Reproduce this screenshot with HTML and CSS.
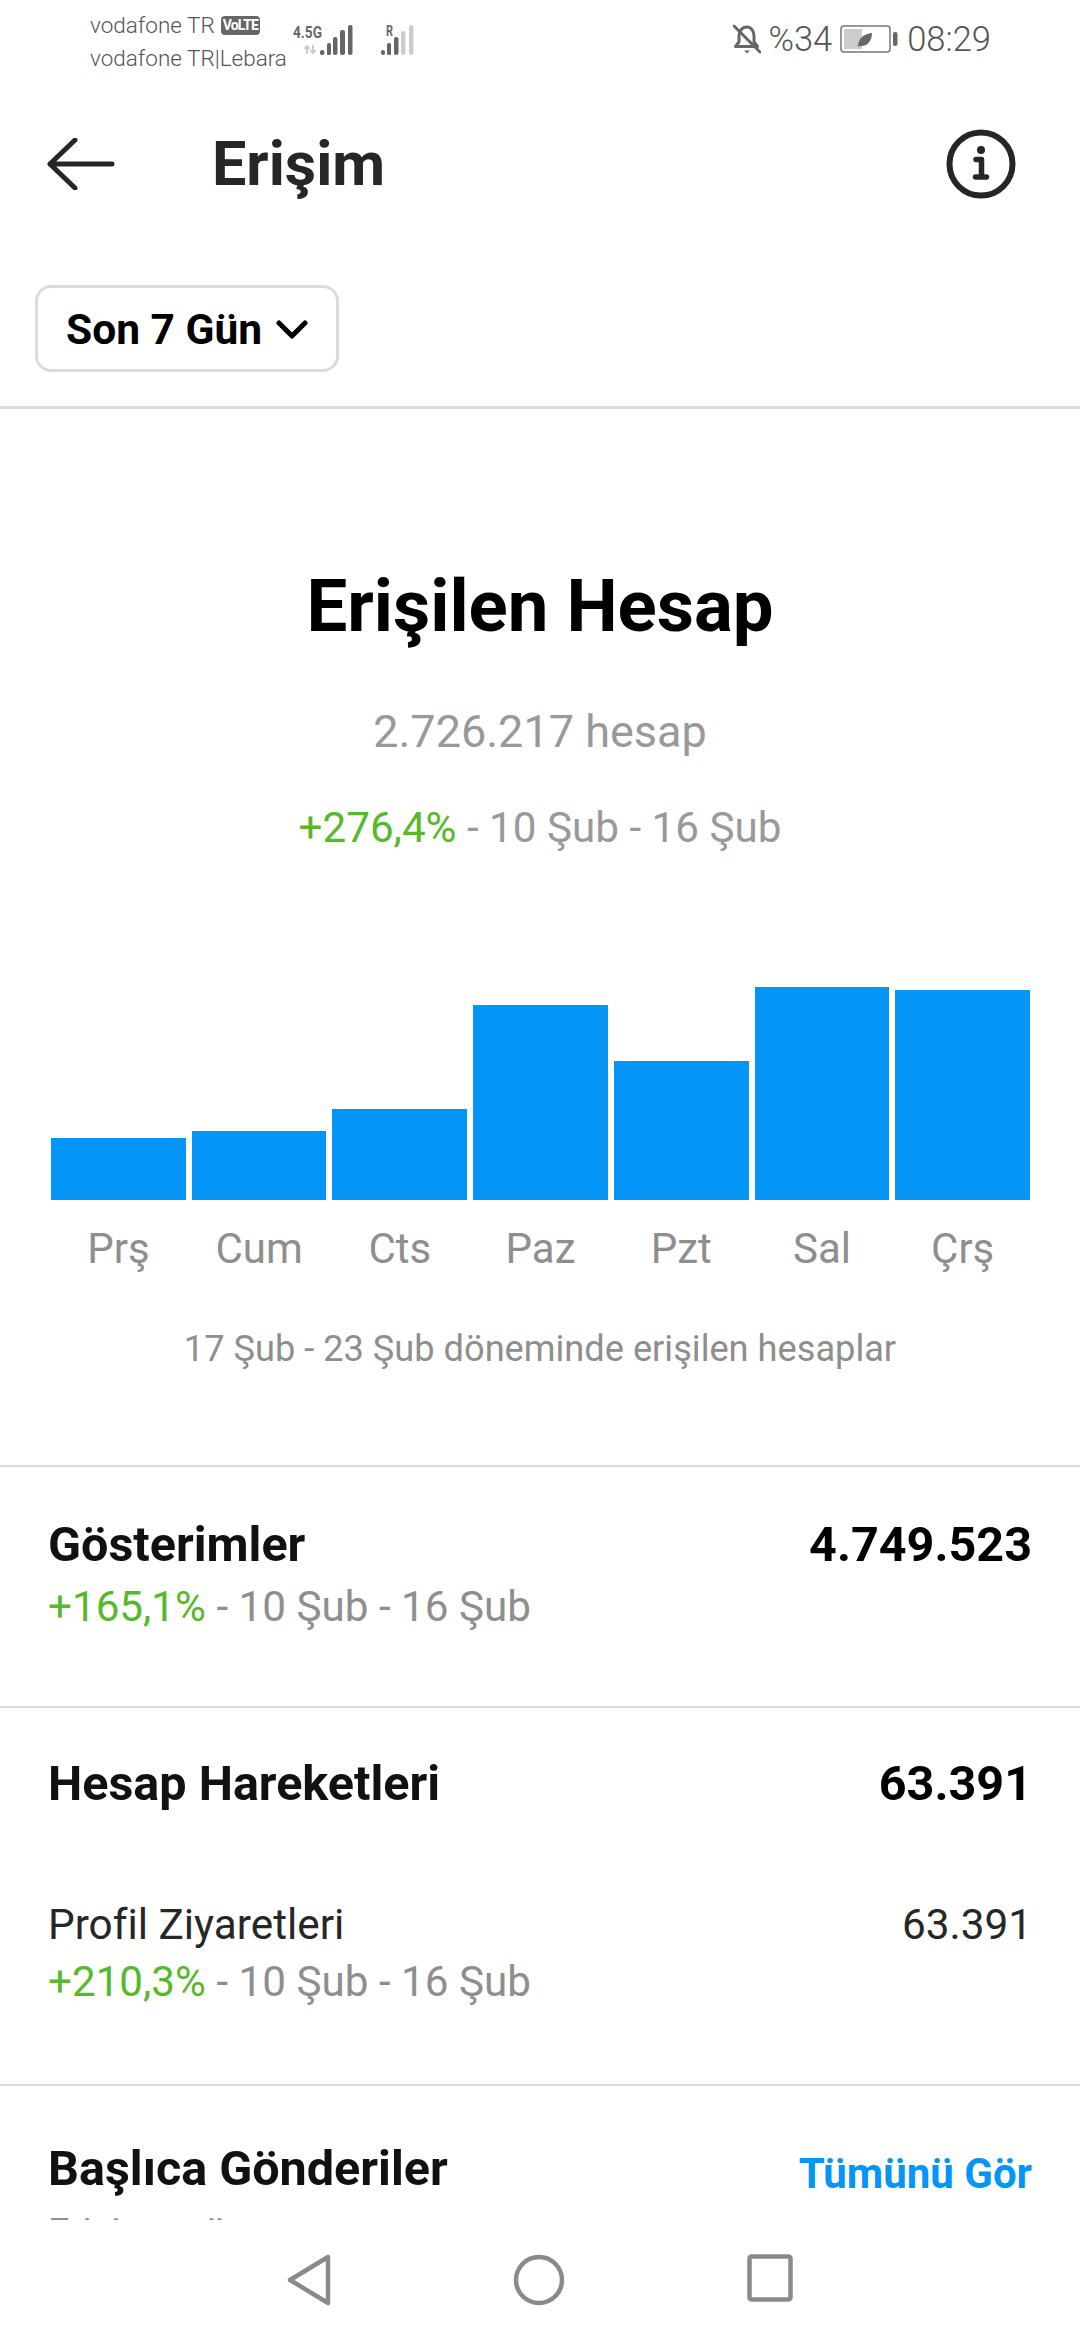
FILE: index.html
```html
<!DOCTYPE html>
<html lang="tr">
<head>
<meta charset="utf-8">
<title>Erişim</title>
<link rel="stylesheet" href="styles.css">
</head>
<body>
<div class="page">
  <div class="status">
    <div class="carriers">
      <div class="carrier">vodafone TR <span class="volte">VoLTE</span></div>
      <div class="carrier">vodafone TR|Lebara</div>
    </div>
    <svg class="sig1" width="64" height="40" viewBox="0 0 64 40">
      <text x="2" y="18" class="sigtext" textLength="29" lengthAdjust="spacingAndGlyphs">4.5G</text>
      <path d="M16 26v8M13.500 29l2.500-3 2.500 3M22 25v8M19.500 30l2.500 3 2.500-3" fill="none" stroke="#ccc" stroke-width="2"/>
      <g fill="#666">
        <rect x="29" y="30" width="4.400" height="5" rx="2"/><rect x="36" y="23" width="4" height="12" rx="1.500"/><rect x="42" y="17" width="4.500" height="18" rx="2"/><rect x="49" y="10" width="5" height="25" rx="2"/><rect x="57" y="5" width="4.500" height="30" rx="2"/>
      </g>
    </svg>
    <svg class="sig2" width="40" height="40" viewBox="0 0 40 40">
      <text x="8" y="16" class="sigtext sm" textLength="7" lengthAdjust="spacingAndGlyphs">R</text>
      <g fill="#666"><rect x="3" y="30" width="4" height="5" rx="2"/><rect x="9" y="23" width="4" height="12" rx="1.500"/><rect x="16" y="17" width="4.500" height="18" rx="2"/></g>
      <g fill="#ccc"><rect x="23" y="11" width="4.500" height="24" rx="2"/><rect x="31" y="5" width="4.500" height="30" rx="2"/></g>
    </svg>
    <div class="status-right">
      <svg class="bell" width="28" height="32" viewBox="0 0 28 32">
        <path d="M14 4c-5 0-8 4-8 9v6l-3.500 4.500h22L21 19v-6c0-5-3-9-7-9z" fill="none" stroke="#666" stroke-width="3" stroke-linejoin="round"/>
        <path d="M11 27.500h6l-3 3z" fill="#666"/>
        <path d="M1 3l26 26" stroke="#666" stroke-width="3" stroke-linecap="round"/>
      </svg>
      <span class="pct">%34</span>
      <svg class="batt" width="58" height="28" viewBox="0 0 58 28">
        <rect x="1" y="1" width="49" height="26" rx="3" fill="#fff" stroke="#777" stroke-width="1.500"/>
        <rect x="4" y="4" width="18" height="20" fill="#ccc"/>
        <path d="M18 22c0-9 6-13 14-14 0 8-5 14-12 13z" fill="#666"/>
        <rect x="53" y="7" width="4.500" height="14" rx="2" fill="#666"/>
      </svg>
      <span class="clock">08:29</span>
    </div>
  </div>

  <header class="topbar">
    <svg class="back" width="68" height="52" viewBox="0 0 68 52">
      <path d="M3 26h62M28 2L3 26l25 24" fill="none" stroke="#262626" stroke-width="5" stroke-linecap="round" stroke-linejoin="round"/>
    </svg>
    <h1 class="title">Erişim</h1>
    <svg class="info" width="70" height="70" viewBox="0 0 70 70">
      <circle cx="35" cy="35" r="31.500" fill="none" stroke="#262626" stroke-width="6"/>
      <circle cx="35" cy="21" r="4" fill="#262626"/>
      <path d="M30 30.500h5.500v16M29.500 48h11" fill="none" stroke="#262626" stroke-width="5.500" stroke-linecap="round" stroke-linejoin="round"/>
    </svg>
  </header>

  <div class="filter-row">
    <div class="filter">
      <span>Son 7 Gün</span>
      <svg width="32" height="20" viewBox="0 0 32 20"><path d="M3 3l13 13L29 3" fill="none" stroke="#000" stroke-width="5" stroke-linecap="round" stroke-linejoin="round"/></svg>
    </div>
  </div>

  <main class="content">
    <section class="reach">
      <h2 class="reach-title">Erişilen Hesap</h2>
      <p class="reach-count">2.726.217 hesap</p>
      <p class="reach-delta"><span class="up">+276,4%</span> - 10 Şub - 16 Şub</p>
      <div class="chart">
        <div class="col"><div class="plot"><div class="bar" style="height:62px"></div></div><span class="day">Prş</span></div>
        <div class="col"><div class="plot"><div class="bar" style="height:69px"></div></div><span class="day">Cum</span></div>
        <div class="col"><div class="plot"><div class="bar" style="height:91px"></div></div><span class="day">Cts</span></div>
        <div class="col"><div class="plot"><div class="bar" style="height:195px"></div></div><span class="day">Paz</span></div>
        <div class="col"><div class="plot"><div class="bar" style="height:139px"></div></div><span class="day">Pzt</span></div>
        <div class="col"><div class="plot"><div class="bar" style="height:213px"></div></div><span class="day">Sal</span></div>
        <div class="col"><div class="plot"><div class="bar" style="height:210px"></div></div><span class="day">Çrş</span></div>
      </div>
      <p class="caption">17 Şub - 23 Şub döneminde erişilen hesaplar</p>
    </section>

    <section class="block impressions">
      <div class="row">
        <span class="label">Gösterimler</span>
        <span class="value">4.749.523</span>
      </div>
      <p class="delta"><span class="up">+165,1%</span> - 10 Şub - 16 Şub</p>
    </section>

    <section class="block actions">
      <div class="row">
        <span class="label">Hesap Hareketleri</span>
        <span class="value">63.391</span>
      </div>
      <div class="row sub">
        <span class="plain">Profil Ziyaretleri</span>
        <span class="plain">63.391</span>
      </div>
      <p class="delta"><span class="up">+210,3%</span> - 10 Şub - 16 Şub</p>
    </section>

    <section class="top-posts">
      <div class="row">
        <span class="label">Başlıca Gönderiler</span>
        <span class="link">Tümünü Gör</span>
      </div>
      <p class="posts-sub">Erişime göre</p>
    </section>
  </main>

  <nav class="navbar">
    <svg width="44" height="52" viewBox="0 0 44 52"><path d="M41 3L3 26l38 23z" fill="none" stroke="#8a8a8a" stroke-width="4.500" stroke-linejoin="round"/></svg>
    <svg width="52" height="52" viewBox="0 0 52 52"><circle cx="26" cy="26" r="23" fill="none" stroke="#8a8a8a" stroke-width="4.500"/></svg>
    <svg width="46" height="48" viewBox="0 0 46 48"><rect x="2.500" y="2.500" width="41" height="43" rx="2" fill="none" stroke="#8a8a8a" stroke-width="4.500"/></svg>
  </nav>
</div>
</body>
</html>
```

FILE: styles.css
```css
* { box-sizing: border-box; }
html, body { margin: 0; padding: 0; background: #fff; }
body { font-family: Roboto, "Noto Sans", sans-serif; }
p, h1, h2 { margin: 0; }

.page { width: 1080px; height: 2340px; display: flex; flex-direction: column; overflow: hidden; background: #fff; }

.status { height: 80px; flex: none; display: flex; align-items: flex-start; padding: 8px 89px 0 90px; position: relative; color: #666; }
.carriers { width: 201px; padding-top: 1px; font-size: 22.500px; line-height: 33px; font-weight: 300; white-space: nowrap; }
.carrier { height: 33px; display: flex; align-items: center; gap: 6px; color: #555; }
.volte { display: inline-block; background: #666; color: #fff; font-size: 14px; font-weight: 700; line-height: 19px; height: 19px; padding: 0 2px; border-radius: 4px; letter-spacing: -0.8px; }
.sig1 { margin: 12px 0 0 0; flex: none; }
.sig2 { margin: 12px 0 0 23px; flex: none; }
.sigtext { font-size: 16px; font-weight: 700; fill: #666; font-family: "Roboto", sans-serif; }
.sigtext.sm { font-size: 14px; }
.status-right { margin-left: auto; display: flex; align-items: center; height: 62px; font-size: 34.500px; font-weight: 300; color: #555; }
.bell { margin-right: 7px; }
.pct { margin-right: 8px; }
.batt { margin-right: 9px; }

.topbar { height: 168px; flex: none; display: flex; align-items: center; padding: 0 0 0 47px; }
.back { flex: none; }
.title { margin-left: 97px; font-size: 61px; font-weight: 700; color: #262626; line-height: 70px; }
.info { margin-left: auto; margin-right: 64px; flex: none; }

.filter-row { flex: none; padding: 37px 0 0 35px; height: 161px; border-bottom: 3px solid #dbdbdb; }
.filter { width: 304px; height: 87px; border: 3px solid #dbdbdb; border-radius: 16px; display: flex; align-items: center; gap: 14px; padding: 2px 0 0 28px; font-size: 42.500px; font-weight: 700; color: #000; white-space: nowrap; }

.content { flex: 1; min-height: 0; overflow: hidden; }

.reach { height: 1058px; border-bottom: 2px solid #dbdbdb; display: flex; flex-direction: column; align-items: center; padding-top: 158px; }
.reach-title { font-size: 72.500px; font-weight: 700; color: #000; line-height: 80px; }
.reach-count { margin-top: 59px; font-size: 45px; font-weight: 400; color: #999; line-height: 52px; }
.reach-delta { margin-top: 45px; font-size: 42.200px; color: #999; line-height: 50px; }
.up { color: #58b82d; }

.chart { margin-top: 131px; width: 979px; margin-left: 1px; display: flex; gap: 6px; }
.col { flex: 1; display: flex; flex-direction: column; align-items: center; }
.plot { height: 216px; width: 100%; display: flex; align-items: flex-end; }
.bar { width: 100%; background: #0495f6; }
.day { margin-top: 25px; font-size: 42px; line-height: 48px; color: #8e8e8e; }
.caption { margin-top: 55px; font-size: 36.200px; line-height: 42px; color: #8e8e8e; }

.block { padding: 0 48px; border-bottom: 2px solid #dbdbdb; }
.impressions { height: 241px; padding-top: 50px; }
.actions { height: 378px; padding-top: 48px; }
.row { display: flex; justify-content: space-between; align-items: baseline; }
.label { font-size: 48.500px; line-height: 56px; font-weight: 700; color: #111; }
.value { font-size: 48.500px; line-height: 56px; font-weight: 700; color: #000; }
.plain { font-size: 42.300px; line-height: 50px; color: #262626; }
.sub { margin-top: 88px; }
.delta { font-size: 42.200px; line-height: 50px; color: #8e8e8e; margin-top: 9px; }
.actions .delta { margin-top: 7px; }

.top-posts { padding: 55px 48px 0; }
.top-posts .row { align-items: flex-start; }
.link { font-size: 42px; line-height: 56px; margin-top: 5px; font-weight: 700; color: #0495f6; }
.posts-sub { margin-top: 8px; font-size: 38px; line-height: 46px; color: #8e8e8e; }

.navbar { height: 120px; flex: none; display: flex; align-items: flex-start; padding: 34px 0 0 287px; gap: 182px; background: #fff; }
```
